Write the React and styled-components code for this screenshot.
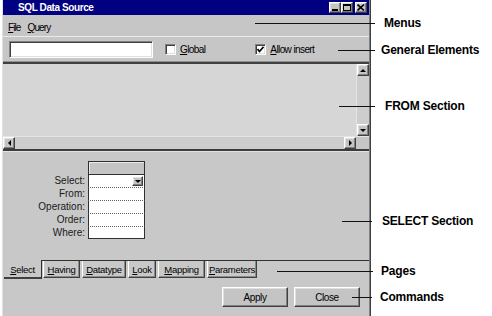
import React from 'react'
import styled, { createGlobalStyle } from 'styled-components'

const Global = createGlobalStyle`
    html, body { margin: 0; padding: 0; background: #fff; }
    * { box-sizing: border-box; }
`;

const raised = `
    border: 1px solid;
    border-color: #ffffff #404040 #404040 #ffffff;
    box-shadow: inset -1px -1px #808080, inset 1px 1px #dfdfdf;
    background: #c4c4c4;
`;

const sunken = `
    border: 1px solid;
    border-color: #808080 #ffffff #ffffff #808080;
    box-shadow: inset 1px 1px #404040, inset -1px -1px #dfdfdf;
    background: #fff;
`;

function App() {
    const fields = ["Select:", "From:", "Operation:", "Order:", "Where:"];
    const tabs = [
        { key: "H", rest: "aving", width: 37 },
        { key: "D", rest: "atatype", width: 44 },
        { key: "L", rest: "ook", width: 28 },
        { key: "M", rest: "apping", width: 47 },
        { key: "P", rest: "arameters", width: 50 },
    ];
    const callouts = [
        { y: 23, from: 255, to: 375, labelX: 384, text: "Menus" },
        { y: 50, from: 338, to: 375, labelX: 381, text: "General Elements" },
        { y: 106, from: 339, to: 375, labelX: 385, text: "FROM Section" },
        { y: 221, from: 342, to: 372, labelX: 382, text: "SELECT Section" },
        { y: 271, from: 277, to: 373, labelX: 381, text: "Pages" },
        { y: 297, from: 352, to: 372, labelX: 380, text: "Commands" },
    ];
    return (
        <Page>
            <Global />
            <Window>
                <TitleBar>
                    <span>SQL Data Source</span>
                    <TitleButtons>
                        <CaptionButton><MinGlyph /></CaptionButton>
                        <CaptionButton><MaxGlyph /></CaptionButton>
                        <CaptionButton $gap={2}>
                            <svg width="8" height="7" viewBox="0 0 8 7">
                                <path d="M0.5 0.5 L7 6.5 M7 0.5 L0.5 6.5" stroke="#000" strokeWidth="1.6" />
                            </svg>
                        </CaptionButton>
                    </TitleButtons>
                </TitleBar>
                <MenuBar>
                    <MenuItem><u>F</u>ile</MenuItem>
                    <MenuItem><u>Q</u>uery</MenuItem>
                </MenuBar>
                <GeneralPanel>
                    <TextInput />
                    <CheckField $gap={12}>
                        <CheckBox />
                        <span><u>G</u>lobal</span>
                    </CheckField>
                    <CheckField $gap={50}>
                        <CheckBox>
                            <svg width="7" height="7" viewBox="0 0 7 7">
                                <path d="M0.5 3 L2.5 5.5 L6.5 0.8" stroke="#000" strokeWidth="1.6" fill="none" />
                            </svg>
                        </CheckBox>
                        <span><u>A</u>llow insert</span>
                    </CheckField>
                </GeneralPanel>
                <FromSection>
                    <FromBody>
                        <Viewport />
                        <VScroll>
                            <ArrowButton><Arrow $dir="up" /></ArrowButton>
                            <Track />
                            <ArrowButton><Arrow $dir="down" /></ArrowButton>
                        </VScroll>
                    </FromBody>
                    <HScroll>
                        <ArrowButton><Arrow $dir="left" /></ArrowButton>
                        <Track />
                        <ArrowButton><Arrow $dir="right" /></ArrowButton>
                        <Corner />
                    </HScroll>
                </FromSection>
                <SelectSection>
                    <FieldGrid>
                        <span />
                        <HeaderCell />
                        {fields.map((field, index) => (
                            <React.Fragment key={index}>
                                <FieldLabel>{field}</FieldLabel>
                                <Cell $first={index === 0} $last={index === fields.length - 1}>
                                    {index === 0 && <DropButton><Arrow $dir="down" /></DropButton>}
                                </Cell>
                            </React.Fragment>
                        ))}
                    </FieldGrid>
                </SelectSection>
                <TabRow>
                    <ActiveTab><u>S</u>elect</ActiveTab>
                    <TabRest>
                        {tabs.map((tab, index) => (
                            <Tab key={index} $width={tab.width}><u>{tab.key}</u>{tab.rest}</Tab>
                        ))}
                    </TabRest>
                </TabRow>
                <Commands>
                    <CommandButton>Apply</CommandButton>
                    <CommandButton>Close</CommandButton>
                </Commands>
            </Window>
            {callouts.map((c, index) => (
                <Callout key={index} $y={c.y} $x={c.from}>
                    <CalloutLine $width={c.to - c.from} />
                    <CalloutLabel $gap={c.labelX - c.to}>{c.text}</CalloutLabel>
                </Callout>
            ))}
        </Page>
    )
}

export default App;

const Page = styled.div`
    position: relative;
    width: 492px;
    height: 316px;
    overflow: hidden;
    background: #fff;
    padding-left: 2px;
`;

const Window = styled.div`
    width: 368px;
    height: 316px;
    display: flex;
    flex-direction: column;
    background: #c6c6c6;
    border-left: 1px solid #e0e0e0;
    border-right: 1px solid #808080;
    box-shadow: 1px 0 0 #404040;
    font-family: "Liberation Sans", Arial, sans-serif;
    font-size: 10px;
    color: #000;
`;

const TitleBar = styled.div`
    height: 15px;
    flex-shrink: 0;
    background: #000080;
    color: #fff;
    font-weight: bold;
    font-size: 10px;
    letter-spacing: -0.4px;
    display: flex;
    align-items: center;
    justify-content: space-between;
    padding: 0 2px 0 15px;
`;

const TitleButtons = styled.div`
    display: flex;
    align-items: center;
`;

const CaptionButton = styled.div`
    ${raised}
    width: 12px;
    height: 11px;
    margin-left: ${props => props.$gap || 0}px;
    display: flex;
    align-items: center;
    justify-content: center;
`;

const MinGlyph = styled.div`
    width: 6px;
    height: 2px;
    background: #000;
    margin-top: 5px;
`;

const MaxGlyph = styled.div`
    width: 8px;
    height: 7px;
    border: 1px solid #000;
    border-top-width: 2px;
`;

const MenuBar = styled.div`
    height: 21px;
    flex-shrink: 0;
    display: flex;
    gap: 7px;
    padding: 7px 0 0 5px;
    line-height: 12px;
`;

const MenuItem = styled.span`
    letter-spacing: -0.9px;
`;

const GeneralPanel = styled.div`
    height: 28px;
    flex-shrink: 0;
    display: flex;
    align-items: center;
    padding-left: 6px;
    border-top: 1px solid #eaeaea;
    border-bottom: 2px solid #404040;
    box-shadow: inset 0 -1px #909090;
`;

const TextInput = styled.div`
    ${sunken}
    width: 144px;
    height: 17px;
`;

const CheckField = styled.label`
    display: flex;
    align-items: center;
    gap: 4px;
    margin-left: ${props => props.$gap}px;
    letter-spacing: -0.6px;
`;

const CheckBox = styled.span`
    ${sunken}
    width: 11px;
    height: 11px;
    display: flex;
    align-items: center;
    justify-content: center;
`;

const FromSection = styled.div`
    height: 87px;
    flex-shrink: 0;
    display: flex;
    flex-direction: column;
    border-bottom: 2px solid #3c3c3c;
`;

const FromBody = styled.div`
    flex: 1;
    display: flex;
`;

const Viewport = styled.div`
    flex: 1;
    background: #d6d6d6;
`;

const VScroll = styled.div`
    width: 13px;
    display: flex;
    flex-direction: column;
    background: #cbcbcb;
    border-left: 1px solid #e4e4e4;
`;

const HScroll = styled.div`
    height: 13px;
    display: flex;
    background: #cbcbcb;
    border-top: 1px solid #e4e4e4;
`;

const Track = styled.div`
    flex: 1;
    background: #cdcdcd;
`;

const Corner = styled.div`
    width: 13px;
    background: #c6c6c6;
`;

const ArrowButton = styled.div`
    ${raised}
    width: 12px;
    height: 12px;
    flex-shrink: 0;
    display: flex;
    align-items: center;
    justify-content: center;
`;

const arrowShapes = {
    up: 'border-left: 3px solid transparent; border-right: 3px solid transparent; border-bottom: 3px solid #000;',
    down: 'border-left: 3px solid transparent; border-right: 3px solid transparent; border-top: 3px solid #000;',
    left: 'border-top: 3px solid transparent; border-bottom: 3px solid transparent; border-right: 3px solid #000;',
    right: 'border-top: 3px solid transparent; border-bottom: 3px solid transparent; border-left: 3px solid #000;',
};

const Arrow = styled.span`
    width: 0;
    height: 0;
    ${props => arrowShapes[props.$dir]}
`;

const SelectSection = styled.div`
    flex: 1;
    padding-top: 9px;
    border-top: 1px solid #e2e2e2;
    background: #c8c8c8;
`;

const FieldGrid = styled.div`
    display: grid;
    grid-template-columns: 82px 57px;
    grid-auto-rows: 13px;
    column-gap: 3px;
`;

const HeaderCell = styled.div`
    border: 1px solid #303030;
    border-bottom: none;
    background: #c4c4c4;
    box-shadow: inset 1px 1px #e8e8e8;
`;

const FieldLabel = styled.span`
    text-align: right;
    line-height: 13px;
    color: #1a1a1a;
`;

const Cell = styled.div`
    position: relative;
    background: #fff;
    border-left: 1px solid #303030;
    border-right: 1px solid #303030;
    border-top: 1px ${props => props.$first ? 'solid #303030' : 'dotted #606060'};
    border-bottom: ${props => props.$last ? '1px solid #303030' : 'none'};
`;

const DropButton = styled.div`
    ${raised}
    position: absolute;
    right: 1px;
    top: 1px;
    width: 11px;
    height: 10px;
    display: flex;
    align-items: center;
    justify-content: center;
`;

const TabRow = styled.div`
    height: 20px;
    flex-shrink: 0;
    display: flex;
    padding-left: 1px;
    font-size: 9.5px;
    letter-spacing: -0.3px;
    background: #c8c8c8;
`;

const ActiveTab = styled.div`
    width: 38px;
    height: 19px;
    display: flex;
    align-items: center;
    justify-content: center;
    border-right: 1px solid #303030;
    border-bottom: 2px solid #404040;
    padding-top: 1px;
`;

const TabRest = styled.div`
    flex: 1;
    display: flex;
    align-items: flex-start;
    gap: 2px;
    padding-left: 1px;
    border-top: 1px solid #303030;
`;

const Tab = styled.div`
    width: ${props => props.$width}px;
    height: 17px;
    display: flex;
    align-items: center;
    justify-content: center;
    border-left: 1px solid #fff;
    border-right: 1px solid #404040;
    border-bottom: 1px solid #404040;
    box-shadow: inset -1px -1px #8a8a8a;
`;

const Commands = styled.div`
    height: 36px;
    flex-shrink: 0;
    display: flex;
    justify-content: flex-end;
    align-items: flex-start;
    gap: 6px;
    padding: 7px 9px 0 0;
    background: #c8c8c8;
`;

const CommandButton = styled.button`
    ${raised}
    width: 66px;
    height: 20px;
    padding: 0;
    font-family: inherit;
    font-size: 10px;
    letter-spacing: -0.4px;
    color: #000;
`;

const Callout = styled.div`
    position: absolute;
    top: ${props => props.$y - 8}px;
    left: ${props => props.$x}px;
    height: 16px;
    display: flex;
    align-items: center;
    pointer-events: none;
`;

const CalloutLine = styled.div`
    width: ${props => props.$width}px;
    height: 1px;
    background: #111;
`;

const CalloutLabel = styled.span`
    margin-left: ${props => props.$gap}px;
    font-family: "Liberation Sans", Arial, sans-serif;
    font-weight: bold;
    font-size: 12px;
    letter-spacing: -0.2px;
    color: #000;
    white-space: nowrap;
`;
